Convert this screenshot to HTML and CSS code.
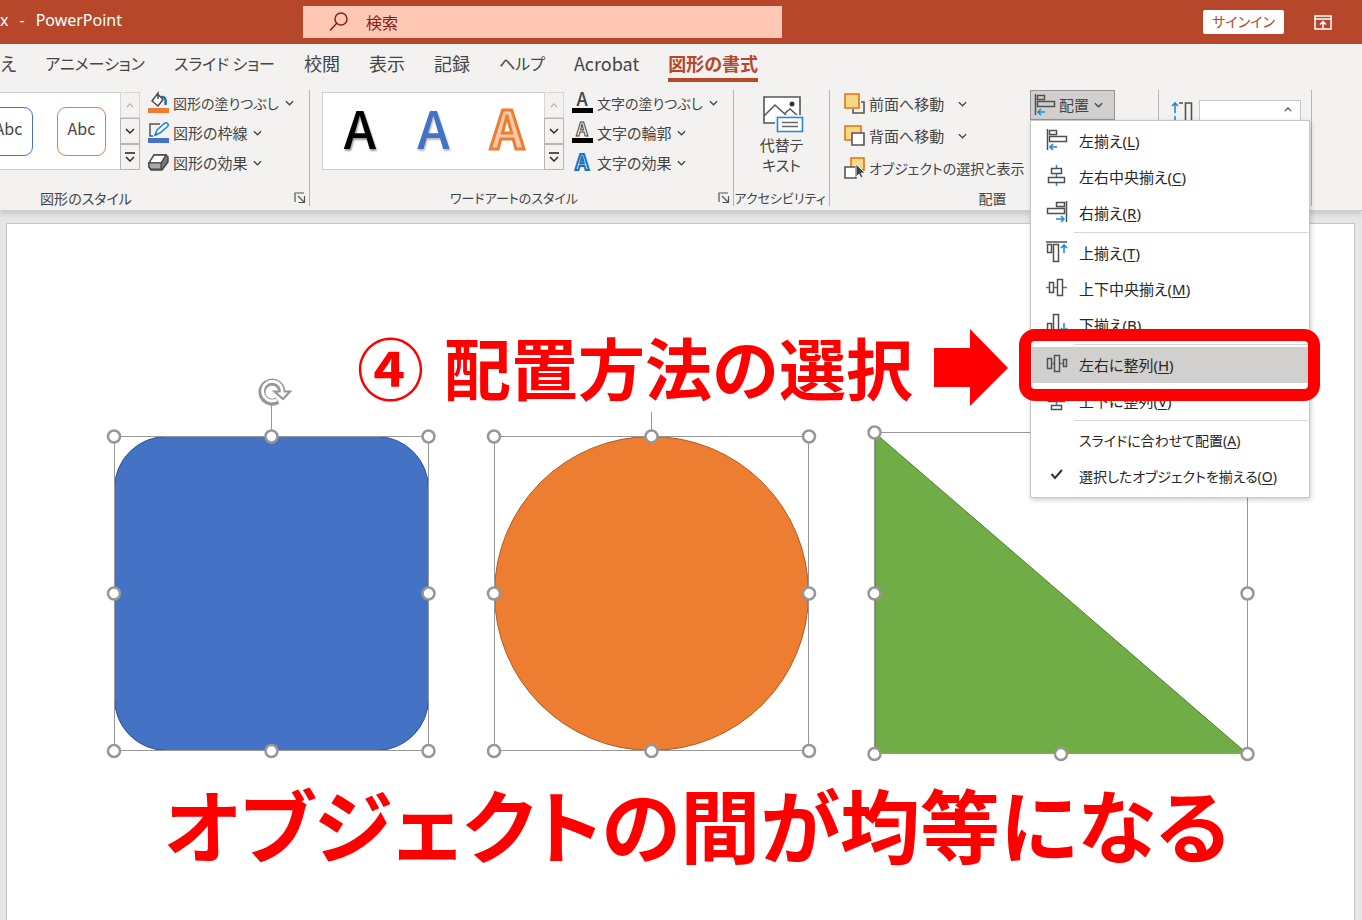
FILE: index.html
```html
<!DOCTYPE html>
<html lang="ja">
<head>
<meta charset="utf-8">
<title>PowerPoint</title>
<link rel="stylesheet" href="styles.css">
</head>
<body>
<svg class="defs" aria-hidden="true">
  <symbol id="chev" viewBox="0 0 10 6"><path d="M1 1l4 4 4-4" fill="none" stroke="currentColor" stroke-width="1.4"/></symbol>
  <symbol id="up" viewBox="0 0 10 6"><path d="M1 5l4-4 4 4" fill="none" stroke="currentColor" stroke-width="1.4"/></symbol>
  <symbol id="more" viewBox="0 0 10 10"><path d="M0 1h10M1 5l4 4 4-4" fill="none" stroke="currentColor" stroke-width="1.4"/></symbol>
  <symbol id="launch" viewBox="0 0 12 12"><path d="M1 10V1h9M4 4l6 6M10.500 4v6.500H4.500" fill="none" stroke="#555" stroke-width="1.2"/></symbol>
  <symbol id="al-left" viewBox="0 0 22 22"><g fill="none" stroke="#505050" stroke-width="1.500"><path d="M1.500 0v21"/><path d="M3.500 1.500h7v4h-7zM3.500 7.500h17v5h-17z"/></g><path d="M11 18H4M7 15l-3 3 3 3" fill="none" stroke="#1e8bd4" stroke-width="1.600"/></symbol>
  <symbol id="al-center" viewBox="0 0 22 22"><path d="M10.500 0v21" stroke="#1e8bd4" stroke-width="1.500"/><g fill="#fff" stroke="#505050" stroke-width="1.500"><path d="M5.500 3.500h10v5h-10zM2.500 12.500h16v5h-16z"/></g></symbol>
  <symbol id="al-right" viewBox="0 0 22 22"><g fill="none" stroke="#505050" stroke-width="1.500"><path d="M20.500 0v21"/><path d="M10.500 1.500h8v4h-8zM1.500 7.500h17v5h-17z"/></g><path d="M10 18h8M15 15l3 3-3 3" fill="none" stroke="#1e8bd4" stroke-width="1.600"/></symbol>
  <symbol id="al-top" viewBox="0 0 22 22"><g fill="none" stroke="#505050" stroke-width="1.500"><path d="M0 1h21"/><path d="M1.500 3.500h4v8h-4zM7.500 3.500h5v17h-5z"/></g><path d="M18 12V4M15 7l3-3 3 3" fill="none" stroke="#1e8bd4" stroke-width="1.600"/></symbol>
  <symbol id="al-mid" viewBox="0 0 22 22"><path d="M0 10.500h21" stroke="#1e8bd4" stroke-width="1.500"/><g fill="#fff" stroke="#505050" stroke-width="1.500"><path d="M3.500 5.500h4v10h-4zM11.500 2.500h5v16h-5z"/></g></symbol>
  <symbol id="al-bot" viewBox="0 0 22 22"><g fill="none" stroke="#505050" stroke-width="1.500"><path d="M0 20.500h21"/><path d="M1.500 10.500h4v8h-4zM7.500 1.500h5v17h-5z"/></g><path d="M18 10v8M15 15l3 3 3-3" fill="none" stroke="#1e8bd4" stroke-width="1.600"/></symbol>
  <symbol id="dist-h" viewBox="0 0 22 22"><path d="M5 10.500h13" stroke="#1e8bd4" stroke-width="1.500"/><g fill="#d6d4d2" stroke="#505050" stroke-width="1.500"><path d="M1.500 5.500h4v10h-4zM8.500 2.500h5v16h-5zM17.500 6.500h3v7h-3z"/></g></symbol>
  <symbol id="dist-v" viewBox="0 0 22 22"><path d="M10.500 4v14" stroke="#1e8bd4" stroke-width="1.500"/><g fill="#fff" stroke="#505050" stroke-width="1.500"><path d="M5.500 1.500h10v4h-10zM2.500 8.500h16v4h-16zM5.500 16.500h10v4h-10z"/></g></symbol>
  <symbol id="tick" viewBox="0 0 22 22"><path d="M5.500 9l3.500 4 7-8" fill="none" stroke="#333" stroke-width="2"/></symbol>
</svg>

<header class="titlebar">
  <span class="doc">x<span>-</span>PowerPoint</span>
  <label class="search">
    <svg width="20" height="20" viewBox="0 0 20 20"><g fill="none" stroke="#862017" stroke-width="1.500"><circle cx="12" cy="7" r="6"/><path d="M8 11l-7 7.500"/></g></svg>
    <input type="text" placeholder="検索" aria-label="検索">
  </label>
  <div class="account">
    <button class="signin">サインイン</button>
    <button class="plain" aria-label="リボンの表示オプション"><svg width="18" height="15" viewBox="0 0 18 15"><g fill="none" stroke="#fff" stroke-width="1.500"><path d="M1 1h16v13H1zM1 4h16M9 13V7M6 9.500l3-3 3 3"/></g></svg></button>
  </div>
</header>

<nav class="tabs">
  <a href="#">替え</a><a href="#" class="kana">アニメーション</a><a href="#" class="kana">スライド ショー</a><a href="#">校閲</a><a href="#">表示</a><a href="#">記録</a><a href="#" class="kana">ヘルプ</a><a href="#">Acrobat</a><a href="#" class="active">図形の書式</a>
</nav>

<section class="ribbon">
  <div class="group g-shape">
    <div class="body">
      <div class="gallery">
        <button class="abc blue">Abc</button><button class="abc orange">Abc</button>
      </div>
      <div class="scroll">
        <button class="off" aria-label="前へ"><svg width="8" height="5"><use href="#up"/></svg></button>
        <button aria-label="次へ"><svg width="10" height="6"><use href="#chev"/></svg></button>
        <button aria-label="その他"><svg width="10" height="10"><use href="#more"/></svg></button>
      </div>
      <div class="cmds">
        <button class="cmd small"><svg width="21" height="22" viewBox="0 0 21 22"><path d="M0 16h21v5H0z" fill="#ed7d31"/><path d="M9 1.500l6 6-5 6.500-6-5 6-8v6" fill="#fff" stroke="#444" stroke-width="1.400"/><path d="M13 5c5-1 5 3 4.500 8" fill="none" stroke="#1b6cab" stroke-width="2.400"/></svg>図形の塗りつぶし<svg class="chev"><use href="#chev"/></svg></button>
        <button class="cmd"><svg width="21" height="22" viewBox="0 0 21 22"><path d="M0 16h21v5H0z" fill="#4472c4"/><path d="M12 2H2v12h3" fill="none" stroke="#555" stroke-width="1.500"/><path d="M7 13l2-5 8-7c2-1 4 1 3 3l-8 7z" fill="#fff" stroke="#1e8bd4" stroke-width="1.600"/><path d="M6 14l2-4 2 3z" fill="#1e8bd4"/></svg>図形の枠線<svg class="chev"><use href="#chev"/></svg></button>
        <button class="cmd"><svg width="21" height="22" viewBox="0 0 21 22"><path d="M1 11l5-8h12l2 2v5l-6 8H3l-2-3z" fill="#777" stroke="#444" stroke-width="1.400"/><path d="M6 3h12l-5 8H1z" fill="#fff" stroke="#444" stroke-width="1.400"/><path d="M1 11h12v6H3l-2-2z" fill="#aaa" stroke="#444" stroke-width="1.200"/></svg>図形の効果<svg class="chev"><use href="#chev"/></svg></button>
      </div>
    </div>
    <div class="caption"><span>図形のスタイル</span><button class="plain" aria-label="図形の書式設定"><svg width="12" height="12"><use href="#launch"/></svg></button></div>
  </div>

  <div class="group g-word">
    <div class="body">
      <div class="gallery">
        <button class="wa wa-black">A</button><button class="wa wa-blue">A</button><button class="wa wa-orange">A</button>
      </div>
      <div class="scroll">
        <button class="off" aria-label="前へ"><svg width="8" height="5"><use href="#up"/></svg></button>
        <button aria-label="次へ"><svg width="10" height="6"><use href="#chev"/></svg></button>
        <button aria-label="その他"><svg width="10" height="10"><use href="#more"/></svg></button>
      </div>
      <div class="cmds">
        <button class="cmd small"><svg width="21" height="22" viewBox="0 0 21 22"><path d="M0 16h21v5H0z"/><text x="10" y="14" class="ico-a" fill="#444">A</text></svg>文字の塗りつぶし<svg class="chev"><use href="#chev"/></svg></button>
        <button class="cmd"><svg width="21" height="22" viewBox="0 0 21 22"><path d="M0 16h21v5H0z"/><text x="10" y="14" class="ico-a outline">A</text></svg>文字の輪郭<svg class="chev"><use href="#chev"/></svg></button>
        <button class="cmd"><svg width="21" height="22" viewBox="0 0 21 22"><text x="10" y="18" class="ico-a glow">A</text></svg>文字の効果<svg class="chev"><use href="#chev"/></svg></button>
      </div>
    </div>
    <div class="caption kana"><span>ワードアートのスタイル</span><button class="plain" aria-label="文字の効果の設定"><svg width="12" height="12"><use href="#launch"/></svg></button></div>
  </div>

  <div class="group g-alt">
    <div class="body">
      <button class="big"><svg width="40" height="37" viewBox="0 0 40 37"><path d="M1 1h36v26H1z" fill="#fff" stroke="#555" stroke-width="1.600"/><path d="M1 20L12 9l13 12M21 18l6-5 8 7" fill="none" stroke="#555" stroke-width="1.500"/><circle cx="29" cy="8" r="2.500" fill="#333"/><path d="M12 19h28v10H12z" fill="#f3f2f1"/><path d="M14.500 21.500h25v14h-25z" fill="#fff" stroke="#1e8bd4" stroke-width="1.600"/><path d="M19 26.500h16M19 30.500h16" stroke="#666" stroke-width="1.400"/></svg><span>代替テ<br>キスト</span></button>
    </div>
    <div class="caption kana"><span>アクセシビリティ</span></div>
  </div>

  <div class="group g-arrange">
    <div class="body">
      <div class="cmds">
        <button class="cmd wide"><svg width="21" height="22" viewBox="0 0 21 22"><path d="M17 9h3v11H9v-4" fill="none" stroke="#555" stroke-width="1.600"/><path d="M1 1h14v14H1z" fill="#f9d788" stroke="#e2740f" stroke-width="1.600"/></svg>前面へ移動<svg class="chev"><use href="#chev"/></svg></button>
        <button class="cmd wide"><svg width="21" height="22" viewBox="0 0 21 22"><path d="M1 1h16v14H1z" fill="#f9d788" stroke="#e2740f" stroke-width="1.600"/><path d="M8 8h12v12H8z" fill="#fff" stroke="#555" stroke-width="1.600"/></svg>背面へ移動<svg class="chev"><use href="#chev"/></svg></button>
        <button class="cmd small"><svg width="21" height="22" viewBox="0 0 21 22"><path d="M7 1h13v12H7z" fill="#f9d788" stroke="#e2740f" stroke-width="1.600"/><path d="M1 10h11v11H1z" fill="#fff" stroke="#555" stroke-width="1.600"/><path d="M12 7v13l3-3 2 4 2-1-2-4h4z" fill="#444" stroke="#fff" stroke-width=".8"/></svg>オブジェクトの選択と表示</button>
      </div>
      <div class="dropdown">
        <button class="cmd open" aria-expanded="true"><svg width="22" height="22"><use href="#al-left"/></svg>配置<svg class="chev"><use href="#chev"/></svg></button>
        <div class="menu" role="menu">
          <button role="menuitem"><svg><use href="#al-left"/></svg><span>左揃え(<u>L</u>)</span></button>
          <button role="menuitem"><svg><use href="#al-center"/></svg><span>左右中央揃え(<u>C</u>)</span></button>
          <button role="menuitem"><svg><use href="#al-right"/></svg><span>右揃え(<u>R</u>)</span></button>
          <hr>
          <button role="menuitem"><svg><use href="#al-top"/></svg><span>上揃え(<u>T</u>)</span></button>
          <button role="menuitem"><svg><use href="#al-mid"/></svg><span>上下中央揃え(<u>M</u>)</span></button>
          <button role="menuitem"><svg><use href="#al-bot"/></svg><span>下揃え(<u>B</u>)</span></button>
          <hr>
          <button role="menuitem" class="current"><svg><use href="#dist-h"/></svg><span>左右に整列(<u>H</u>)</span></button>
          <button role="menuitem"><svg><use href="#dist-v"/></svg><span>上下に整列(<u>V</u>)</span></button>
          <hr>
          <button role="menuitem" class="small"><svg></svg><span>スライドに合わせて配置(<u>A</u>)</span></button>
          <button role="menuitem" class="small"><svg><use href="#tick"/></svg><span>選択したオブジェクトを揃える(<u>O</u>)</span></button>
        </div>
      </div>
    </div>
    <div class="caption"><span>配置</span></div>
  </div>

  <div class="group g-size">
    <div class="body">
      <svg width="22" height="22" viewBox="0 0 22 22"><path d="M4 20v-4M4 13V3M1 6l3-3 3 3" fill="none" stroke="#1e8bd4" stroke-width="1.600"/><path d="M8 3h4M14.500 22V3h6v19" fill="none" stroke="#505050" stroke-width="1.600"/></svg>
      <div class="spin"><input type="text" aria-label="高さ"><svg width="8" height="5"><use href="#up"/></svg></div>
    </div>
  </div>
</section>

<main class="workspace">
  <div class="slide">
    <svg class="drawing" width="1348" height="696" viewBox="7 224 1348 696">
      <g stroke-width="1">
        <rect x="114.500" y="436.500" width="314" height="314" rx="52" fill="#4472c4" stroke="#2f528f"/>
        <circle cx="651.500" cy="593.500" r="157" fill="#ed7d31" stroke="#ae5a21"/>
        <path d="M875 433V753.500H1247z" fill="#70ad47" stroke="#507e32"/>
      </g>
      <g fill="none" stroke="#979797" stroke-width="1">
        <path d="M114.500 436.500h314v314h-314zM494.500 436.500h314v314h-314zM874.500 432.500h373v321h-373zM271.500 404v32M651.500 412v24"/>
      </g>
      <g fill="#fff" stroke="#979797" stroke-width="2.500">
        <circle cx="114" cy="436.500" r="6"/><circle cx="271.500" cy="436.500" r="6"/><circle cx="428.500" cy="436.500" r="6"/>
        <circle cx="114" cy="593.500" r="6"/><circle cx="428.500" cy="593.500" r="6"/>
        <circle cx="114" cy="751" r="6"/><circle cx="271.500" cy="751" r="6"/><circle cx="428.500" cy="751" r="6"/>
        <circle cx="494" cy="436.500" r="6"/><circle cx="651.500" cy="436.500" r="6"/><circle cx="809" cy="436.500" r="6"/>
        <circle cx="494" cy="593.500" r="6"/><circle cx="809" cy="593.500" r="6"/>
        <circle cx="494" cy="751" r="6"/><circle cx="651.500" cy="751" r="6"/><circle cx="809" cy="751" r="6"/>
        <circle cx="874.500" cy="432.500" r="6"/><circle cx="874.500" cy="593.500" r="6"/><circle cx="1247.500" cy="593.500" r="6"/>
        <circle cx="874.500" cy="754" r="6"/><circle cx="1061" cy="754" r="6"/><circle cx="1247.500" cy="754" r="6"/>
      </g>
      <g fill="none">
        <path d="M277.500 400.500A10 10 0 1 1 282 392" stroke="#979797" stroke-width="7"/>
        <path d="M274.500 391.500h15.500l-7 7.500z" fill="#fff" stroke="#979797" stroke-width="2.200"/>
        <path d="M276.500 400A9.800 9.800 0 1 1 282 393" stroke="#fff" stroke-width="2.800"/>
      </g>
      <path d="M934 348h36v-19l38 39-38 38v-19h-36z" fill="#f00"/>
    </svg>
    <p class="note step"><span>④</span><span>配置方法の選択</span></p>
    <p class="note result">オブジェクトの間が均等になる</p>
  </div>
</main>
</body>
</html>
```
FILE: styles.css
```css
* { box-sizing: border-box; }
body {
  margin: 0;
  min-height: 100vh;
  display: flex;
  flex-direction: column;
  overflow: hidden;
  background: #e6e6e6;
  color: #444;
  font: 15px/20px "Noto Sans CJK JP", sans-serif;
  font-feature-settings: "palt";
}
button, input {
  font: inherit;
  font-feature-settings: inherit;
  color: inherit;
  margin: 0;
  padding: 0;
  border: 0;
  background: none;
}
svg { flex: none; display: block; overflow: visible; }
.defs { position: absolute; width: 0; height: 0; }

.titlebar {
  display: grid;
  grid-template-columns: 303px 479px 1fr;
  align-items: center;
  height: 44px;
  background: #b7472a;
  color: #fff;
}
.doc { display: flex; gap: 11px; font-family: "Noto Sans", sans-serif; font-size: 16px; padding-bottom: 4px; }
.search {
  display: flex;
  align-items: center;
  gap: 17px;
  height: 32px;
  padding-left: 26px;
  background: #ffc8b4;
  color: #862017;
  font-size: 16px;
}
.search input { flex: 1; outline: 0; }
.search input::placeholder { color: #862017; opacity: 1; }
.account { display: flex; justify-content: flex-end; align-items: center; gap: 30px; padding-right: 30px; }
.signin { width: 81px; height: 24px; background: #fff; color: #b7472a; border-radius: 2px; font-size: 14px; padding-bottom: 2px; }

.tabs {
  display: flex;
  gap: 29px;
  height: 44px;
  margin-left: -18px;
  background: #f3f2f1;
  font-size: 18px;
  line-height: 38px;
  white-space: nowrap;
}
.tabs a { color: #444; text-decoration: none; height: 38px; }
.tabs .kana { font-size: 16px; }
.tabs .active { color: #b7472a; font-weight: 700; border-bottom: 4px solid #b7472a; }

.ribbon {
  display: flex;
  padding: 2px 0 4px;
  background: #f3f2f1;
  border-bottom: 1px solid #d0cecc;
  box-shadow: 0 3px 5px #0002;
  position: relative;
  z-index: 1;
}
.group { flex: none; display: flex; flex-direction: column; border-right: 1px solid #b8b6b4; height: 116px; }
.body { display: flex; flex: 1; padding-top: 2px; }
.caption { display: flex; align-items: center; height: 16px; padding-right: 3px; font-size: 14px; white-space: nowrap; }
.caption.kana { font-size: 13px; }
.caption span { flex: 1; text-align: center; }
.small { font-size: 14px; }
.g-shape { width: 432px; margin-left: -122px; }
.g-shape .body { padding-left: 12px; }
.g-word { width: 424px; }
.g-word .body { padding-left: 12px; }
.g-alt { width: 96px; }
.g-arrange { width: 329px; }
.g-size { width: 153px; }
.gallery {
  display: flex;
  align-items: center;
  height: 78px;
  background: #fff;
  border: 1px solid #d0cecc;
  border-right: 0;
}
.g-shape .gallery { width: 230px; justify-content: flex-end; gap: 24px; padding-right: 14px; }
.g-word .gallery { width: 222px; }
.abc { width: 49px; height: 49px; border: 1px solid; border-radius: 9px; color: #444; font-size: 16px; padding-bottom: 6px; }
.abc.blue { border-color: #4472c4; }
.abc.orange { border-color: #ed7d31; }
.wa { flex: 1; font: 500 52px/70px "Noto Sans CJK JP", sans-serif; padding-bottom: 8px; }
.wa-black { color: #000; text-shadow: 1px 2px 2px #0006; }
.wa-blue { color: #4472c4; text-shadow: 1px 2px 2px #0004; }
.wa-orange { color: #f8cbad; font-weight: 700; -webkit-text-stroke: 3px #ed7d31; }
.scroll { display: grid; grid-template-rows: repeat(3, 1fr); width: 20px; height: 78px; }
.scroll button { display: grid; place-items: center; border: 1px solid #b8b6b4; color: #222; }
.scroll .off { color: #b0aeac; border-color: #d8d6d4; }
.cmds { display: flex; flex-direction: column; padding-left: 8px; margin-top: -4px; }
.cmd { display: flex; align-items: center; gap: 4px; height: 30px; white-space: nowrap; }
.chev { width: 9px; height: 6px; margin-left: 2px; }
.wide .chev { margin-left: 10px; }
.ico-a { font: 500 18px "Noto Sans CJK JP", sans-serif; text-anchor: middle; }
.outline { fill: #fff; stroke: #444; stroke-width: 1px; font-weight: 700; }
.glow { fill: #fff; stroke: #1474c4; stroke-width: 2px; font-weight: 700; font-size: 21px; }
.big { display: flex; flex-direction: column; align-items: center; gap: 2px; width: 100%; height: 84px; margin-top: 4px; }
.big svg { margin-left: 3px; }
.g-arrange .cmds { width: 200px; padding-left: 14px; }
.g-arrange .cmds .cmd { height: 32px; }

.dropdown { position: relative; height: 30px; margin-top: -2px; }
.open { width: 85px; padding-left: 3px; gap: 3px; background: #d2d0ce; border: 1px solid #979593; }
.menu {
  position: absolute;
  top: 30px;
  left: 0;
  width: 280px;
  padding: 2px 1px;
  background: #fff;
  border: 1px solid #c6c6c6;
  box-shadow: 1px 2px 5px #0003;
  color: #262626;
  font-family: "Noto Sans", "Noto Sans CJK JP", sans-serif;
}
.menu button { position: relative; display: flex; align-items: center; gap: 11px; width: 100%; height: 36px; padding-left: 14px; white-space: nowrap; }
.menu svg { width: 22px; height: 22px; margin-bottom: 3px; }
.menu hr { height: 1px; margin: 1px 0 2px 42px; border: 0; background: #d8d8d8; }
.menu u { text-underline-offset: 2px; }
.menu .current { background: #d2d0ce; }
.current::after {
  content: "";
  position: absolute;
  z-index: 2;
  inset: -18px -12px -18px -13px;
  border: 12px solid #f00;
  border-radius: 16px;
}
.g-size .body { padding: 10px 10px 0 12px; gap: 6px; }
.spin { display: flex; align-items: flex-start; flex: 1; height: 24px; padding: 6px 8px; background: #fff; border: 1px solid #c8c6c4; }
.spin input { flex: 1; min-width: 0; width: 0; }

.workspace { flex: 1; display: flex; padding: 12px 7px 0 6px; }
.slide { position: relative; flex: 1; background: #fff; border: 1px solid #c6c6c6; border-bottom: 0; }
.drawing { position: absolute; top: 0; left: 0; }
.note { position: absolute; margin: 0; color: #f00; font-weight: 700; white-space: nowrap; }
.step { left: 350px; top: 97px; display: flex; gap: 20px; font-size: 67px; line-height: 90px; font-feature-settings: normal; }
.result { left: 157px; top: 543px; font-size: 80px; line-height: 110px; }
```
